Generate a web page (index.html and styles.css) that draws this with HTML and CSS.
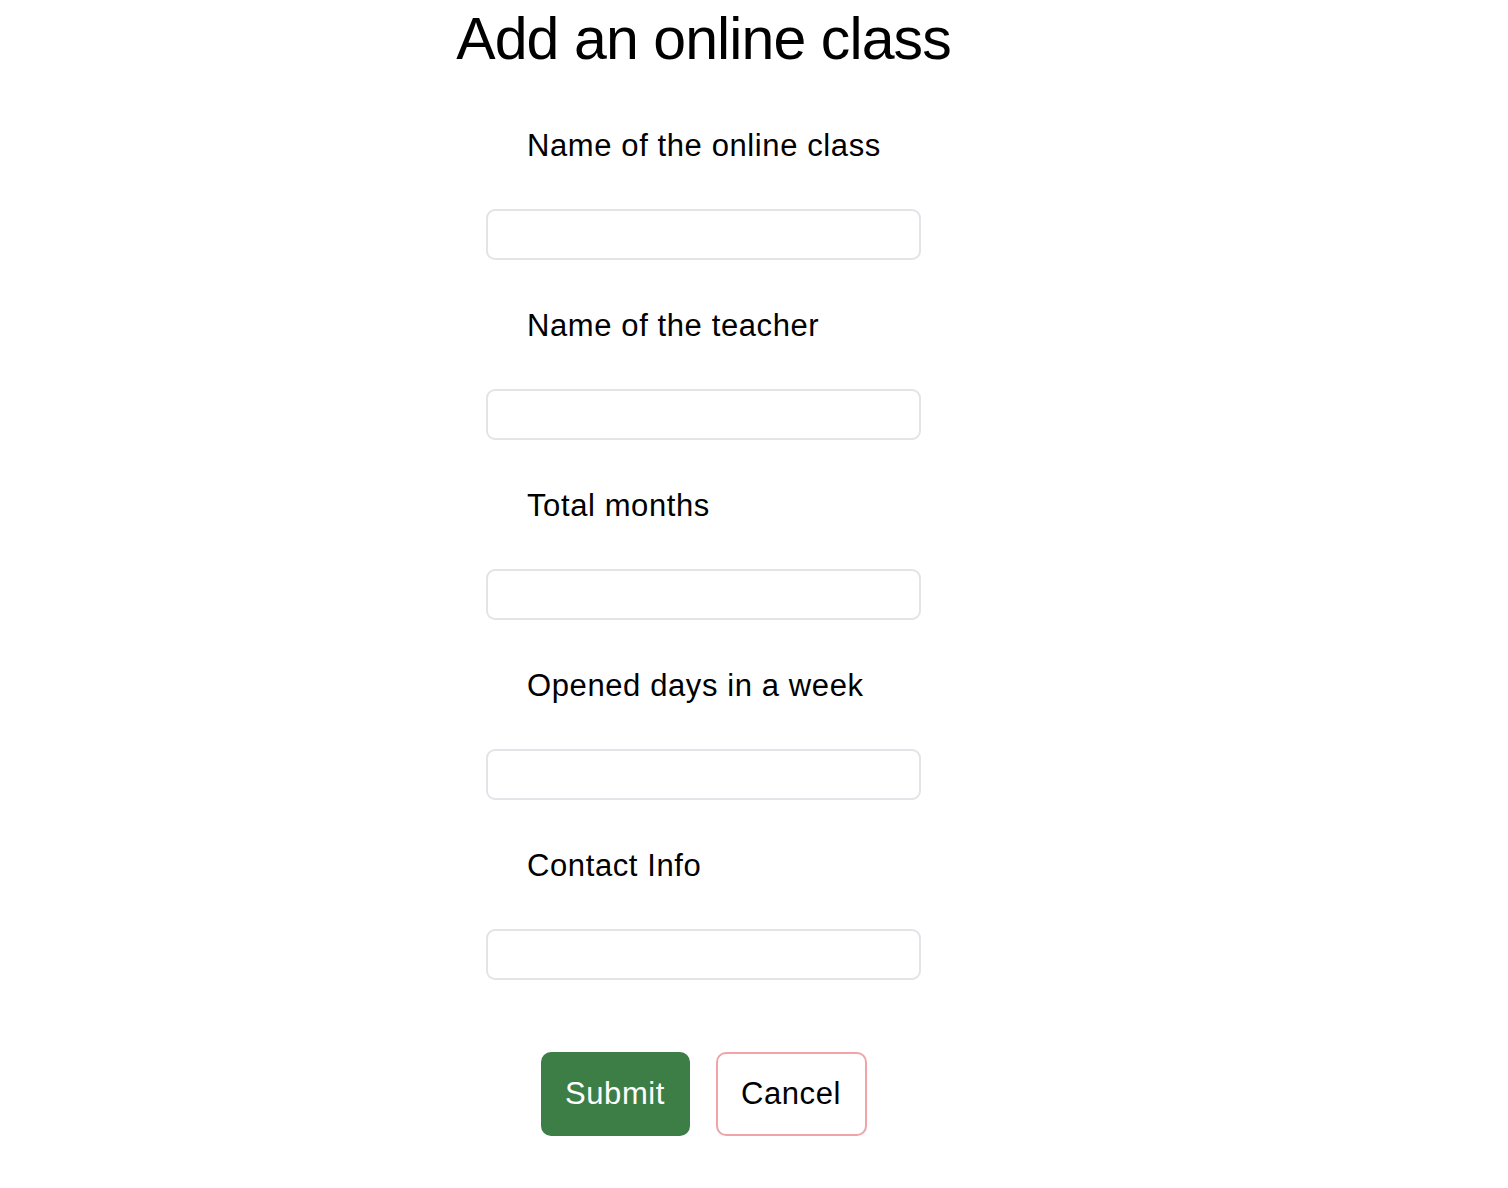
FILE: index.html
```html
<!DOCTYPE html>
<html lang="en">
<head>
<meta charset="utf-8">
<title>Add an online class</title>
<link rel="stylesheet" href="styles.css">
</head>
<body>
<main class="page">
  <h1 class="title">Add an online class</h1>
  <form class="form">
    <div class="field">
      <label class="label" for="f1">Name of the online class</label>
      <input class="input" id="f1" type="text">
    </div>
    <div class="field">
      <label class="label" for="f2">Name of the teacher</label>
      <input class="input" id="f2" type="text">
    </div>
    <div class="field">
      <label class="label" for="f3">Total months</label>
      <input class="input" id="f3" type="text">
    </div>
    <div class="field">
      <label class="label" for="f4">Opened days in a week</label>
      <input class="input" id="f4" type="text">
    </div>
    <div class="field">
      <label class="label" for="f5">Contact Info</label>
      <input class="input" id="f5" type="text">
    </div>
    <div class="actions">
      <button class="btn btn-submit" type="submit">Submit</button>
      <button class="btn btn-cancel" type="button">Cancel</button>
    </div>
  </form>
</main>
</body>
</html>
```
FILE: styles.css
```css
html, body {
  margin: 0;
  padding: 0;
  background: #ffffff;
}

body {
  font-family: "Liberation Sans", Arial, sans-serif;
  color: #000000;
}

.page {
  width: 1407px;
  display: flex;
  flex-direction: column;
  align-items: center;
}

.title {
  margin: 5px 0 0;
  font-size: 59px;
  line-height: 68px;
  font-weight: 400;
  letter-spacing: -0.9px;
}

.form {
  width: 435px;
  margin-top: 55px;
  display: flex;
  flex-direction: column;
}

.field {
  display: flex;
  flex-direction: column;
  height: 180px;
}

.label {
  display: block;
  padding-left: 41px;
  font-size: 31px;
  line-height: 36px;
  letter-spacing: 0.6px;
  margin-bottom: 45px;
}

.input {
  box-sizing: border-box;
  width: 435px;
  height: 51px;
  margin: 0;
  border: 2px solid #e3e3e8;
  border-radius: 9px;
  background: #ffffff;
  font-family: inherit;
  font-size: 20px;
  padding: 0 12px;
  outline: none;
}

.actions {
  display: flex;
  justify-content: center;
  gap: 26px;
  margin-top: 24px;
}

.btn {
  box-sizing: border-box;
  height: 84px;
  border-radius: 10px;
  font-family: "Liberation Sans", Arial, sans-serif;
  font-size: 31px;
  letter-spacing: 0.6px;
  padding: 0;
  cursor: pointer;
}

.btn-submit {
  width: 149px;
  background: #3d7e47;
  color: #ffffff;
  border: 2px solid #3d7e47;
}

.btn-cancel {
  width: 151px;
  background: #ffffff;
  color: #000000;
  border: 2px solid #f0a4a6;
}
```
